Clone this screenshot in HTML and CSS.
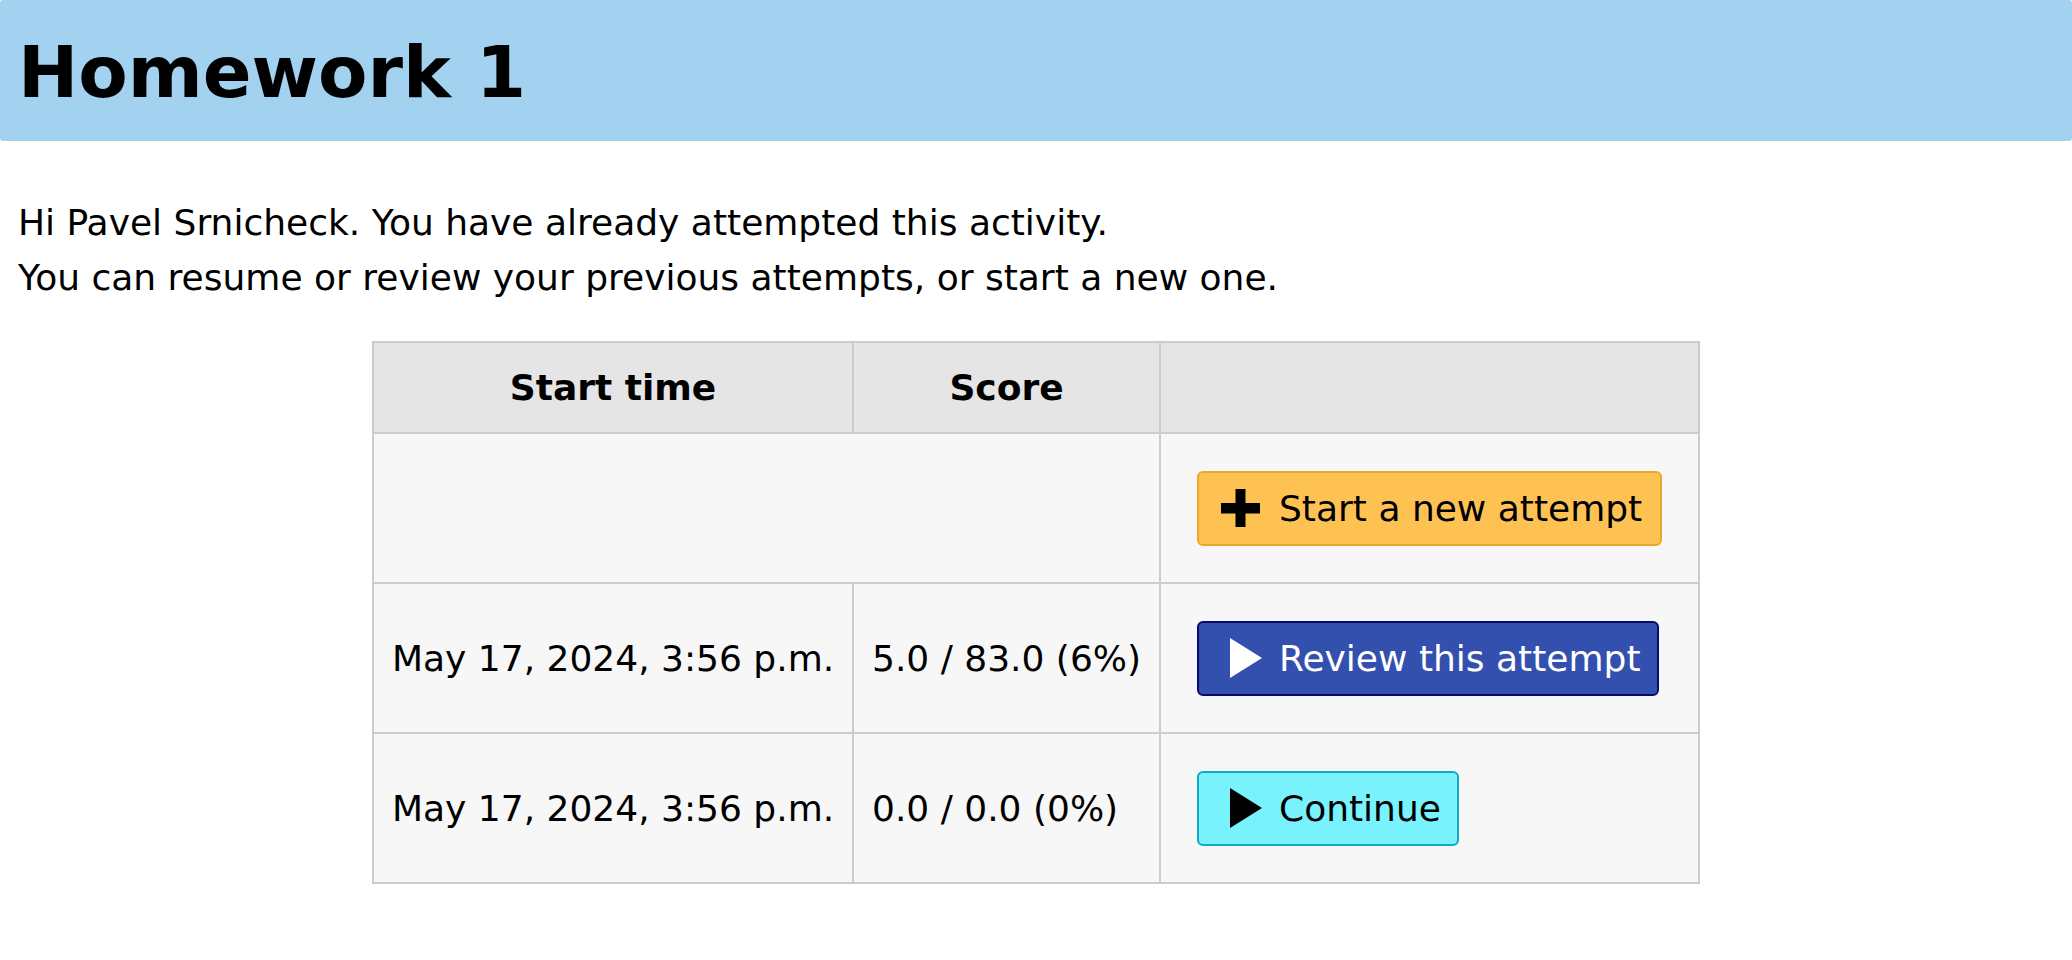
FILE: index.html
```html
<!DOCTYPE html>
<html lang="en">
<head>
<meta charset="utf-8">
<title>Homework 1</title>
<link rel="stylesheet" href="styles.css">
</head>
<body>
<header class="page-header">
  <h1 class="title">Homework 1</h1>
</header>
<main class="content">
  <p class="intro">Hi Pavel Srnicheck. You have already attempted this activity.<br>You can resume or review your previous attempts, or start a new one.</p>
  <table class="attempts">
    <colgroup>
      <col class="c-time">
      <col class="c-score">
      <col class="c-action">
    </colgroup>
    <thead>
      <tr class="head-row">
        <th>Start time</th>
        <th>Score</th>
        <th></th>
      </tr>
    </thead>
    <tbody>
      <tr class="body-row">
        <td colspan="2"></td>
        <td class="action">
          <a class="btn btn-new" href="#">
            <svg class="ico ico-plus" width="39" height="38" viewBox="0 0 39 38"><rect x="14.5" y="0" width="10" height="38" fill="#000"/><rect x="0" y="14" width="39" height="10.5" fill="#000"/></svg>
            <span>Start a new attempt</span>
          </a>
        </td>
      </tr>
      <tr class="body-row">
        <td>May 17, 2024, 3:56 p.m.</td>
        <td>5.0 / 83.0 (6%)</td>
        <td class="action">
          <a class="btn btn-review" href="#">
            <svg class="ico ico-play" width="32" height="40" viewBox="0 0 32 40"><polygon points="0,0 32,20 0,40" fill="#fff"/></svg>
            <span>Review this attempt</span>
          </a>
        </td>
      </tr>
      <tr class="body-row">
        <td>May 17, 2024, 3:56 p.m.</td>
        <td>0.0 / 0.0 (0%)</td>
        <td class="action">
          <a class="btn btn-continue" href="#">
            <svg class="ico ico-play" width="32" height="40" viewBox="0 0 32 40"><polygon points="0,0 32,20 0,40" fill="#000"/></svg>
            <span>Continue</span>
          </a>
        </td>
      </tr>
    </tbody>
  </table>
</main>
</body>
</html>
```

FILE: styles.css
```css
html, body {
  margin: 0;
  padding: 0;
  background: #ffffff;
}

body {
  font-family: "DejaVu Sans", "Liberation Sans", sans-serif;
  font-size: 36px;
  color: #000000;
}

.page-header {
  background: #a3d1f0;
  height: 141px;
  box-sizing: border-box;
  padding: 30px 18px 0 18px;
  border-radius: 3px;
}

.title {
  margin: 0;
  font-size: 72px;
  font-weight: bold;
  line-height: 84px;
}

.content {
  padding: 0 18px;
}

.intro {
  margin: 54px 0 36px 0;
  line-height: 55px;
}

.attempts {
  border-collapse: collapse;
  table-layout: fixed;
  width: 1326px;
  margin: 0 auto;
}

.c-time { width: 480px; }
.c-score { width: 307px; }
.c-action { width: 539px; }

.attempts th,
.attempts td {
  border: 2px solid #cccccc;
  padding: 0 18px;
  white-space: nowrap;
  vertical-align: middle;
  line-height: normal;
}

.head-row th {
  background: #e5e5e5;
  height: 89px;
  font-weight: bold;
  text-align: center;
}

.body-row td {
  background: #f7f7f7;
  height: 148px;
  text-align: left;
}

.action {
  padding-left: 36px !important;
}

.btn {
  display: inline-flex;
  align-items: center;
  box-sizing: border-box;
  height: 75px;
  padding: 0 18px 0 0;
  border: 2px solid;
  border-radius: 6px;
  text-decoration: none;
  font-size: 36px;
  vertical-align: middle;
}

.ico {
  display: block;
  flex: none;
}

.ico-plus {
  margin: 0 19px 0 22px;
}

.ico-play {
  margin: 0 17px 0 31px;
}

.btn-new {
  background: #fec253;
  border-color: #e8a82f;
  color: #000000;
}

.btn-review {
  background: #3450ae;
  border-color: #0b0b6b;
  color: #ffffff;
  padding-right: 16px;
}

.btn-continue {
  background: #78f2fc;
  border-color: #12a9c1;
  color: #000000;
  padding-right: 16px;
}
```
